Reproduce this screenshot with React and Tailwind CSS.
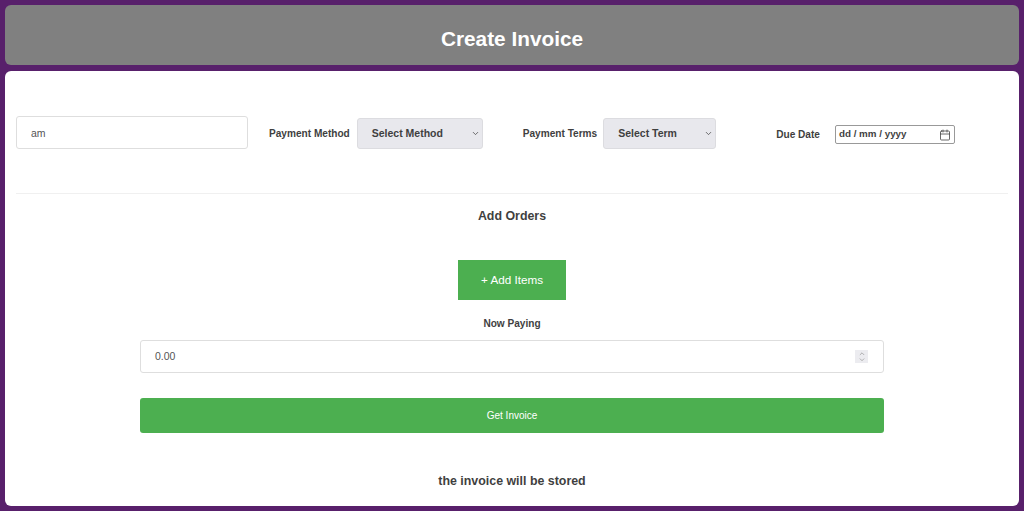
// App.jsx
import { Calendar, ChevronDown, ChevronUp } from 'lucide-react'

function FakeSelect({ label, width }) {
  return (
    <div className={`flex h-[31px] ${width} items-center justify-between rounded-[3px] border border-[#dcdce0] bg-[#e8e8ed] pl-[14px] pr-[2px] text-[10.5px] font-bold text-[#3f3f3f]`}>
      <span>{label}</span>
      <ChevronDown size={9} strokeWidth={2} className="text-[#444]" />
    </div>
  )
}

function Label({ children, className = '' }) {
  return <span className={`text-[10.1px] font-bold text-[#3f3f3f] ${className}`}>{children}</span>
}

export default function App() {
  return (
    <div className="flex h-[511px] flex-col gap-[6px] bg-[#58206b] p-[5px] font-['Liberation_Sans',Arial,sans-serif]">
      <header className="flex h-[60px] shrink-0 items-center justify-center rounded-[6px] bg-[#808080] pt-[8px]">
        <h1 className="text-[20.8px] font-bold text-white">Create Invoice</h1>
      </header>

      <main className="flex min-h-0 flex-1 flex-col rounded-[6px] bg-white px-[11px]">
        {/* top filters */}
        <div className="flex h-[123px] shrink-0 items-start border-b border-[#f0f0f0] pt-[45px]">
          <input
            readOnly
            value="am"
            className="h-[33px] w-[232px] rounded-[3px] border border-[#dedede] pl-[14px] text-[10.5px] text-[#555] outline-none"
          />
          <div className="ml-[21px] mt-[2px] flex items-center gap-[7px]">
            <Label>Payment Method</Label>
            <FakeSelect label="Select Method" width="w-[126px]" />
          </div>
          <div className="ml-[40px] mt-[2px] flex items-center gap-[6px]">
            <Label>Payment Terms</Label>
            <FakeSelect label="Select Term" width="w-[113px]" />
          </div>
          <div className="ml-[60px] mt-[9px] flex items-center gap-[15px]">
            <Label>Due Date</Label>
            <div className="flex h-[19px] w-[120px] items-center justify-between rounded-[2px] border border-[#999] pl-[3px] pr-[3px] text-[9.8px] font-bold text-[#3f3f3f]">
              <span>dd / mm / yyyy</span>
              <Calendar size={12} strokeWidth={1.6} className="text-[#444]" />
            </div>
          </div>
        </div>

        <h2 className="mt-[14px] text-center text-[12.4px] leading-[16px] font-bold text-[#3f3f3f]">Add Orders</h2>

        <button className="mx-auto mt-[36px] h-[40px] w-[108px] bg-[#4caf50] text-[11.7px] text-white">+ Add Items</button>

        <div className="mx-auto mt-[18px] flex w-[744px] flex-col items-center">
          <Label className="leading-[12px]">Now Paying</Label>
          <div className="mt-[10px] flex h-[33px] w-full items-center justify-between rounded-[3px] border border-[#dedede] pl-[14px] pr-[15px] text-[10.5px] text-[#555]">
            <span>0.00</span>
            <span className="flex h-[13px] w-[13px] flex-col items-center justify-center bg-[#ececf0] text-[#888]">
              <ChevronUp size={8} strokeWidth={2} className="-mb-[1px]" />
              <ChevronDown size={8} strokeWidth={2} className="-mt-[1px]" />
            </span>
          </div>
          <button className="mt-[25px] h-[35px] w-full rounded-[3px] bg-[#4caf50] text-[10px] text-white">Get Invoice</button>
        </div>

        <p className="mt-[40px] text-center text-[12.4px] leading-[16px] font-bold text-[#3f3f3f]">the invoice will be stored</p>
      </main>
    </div>
  )
}
